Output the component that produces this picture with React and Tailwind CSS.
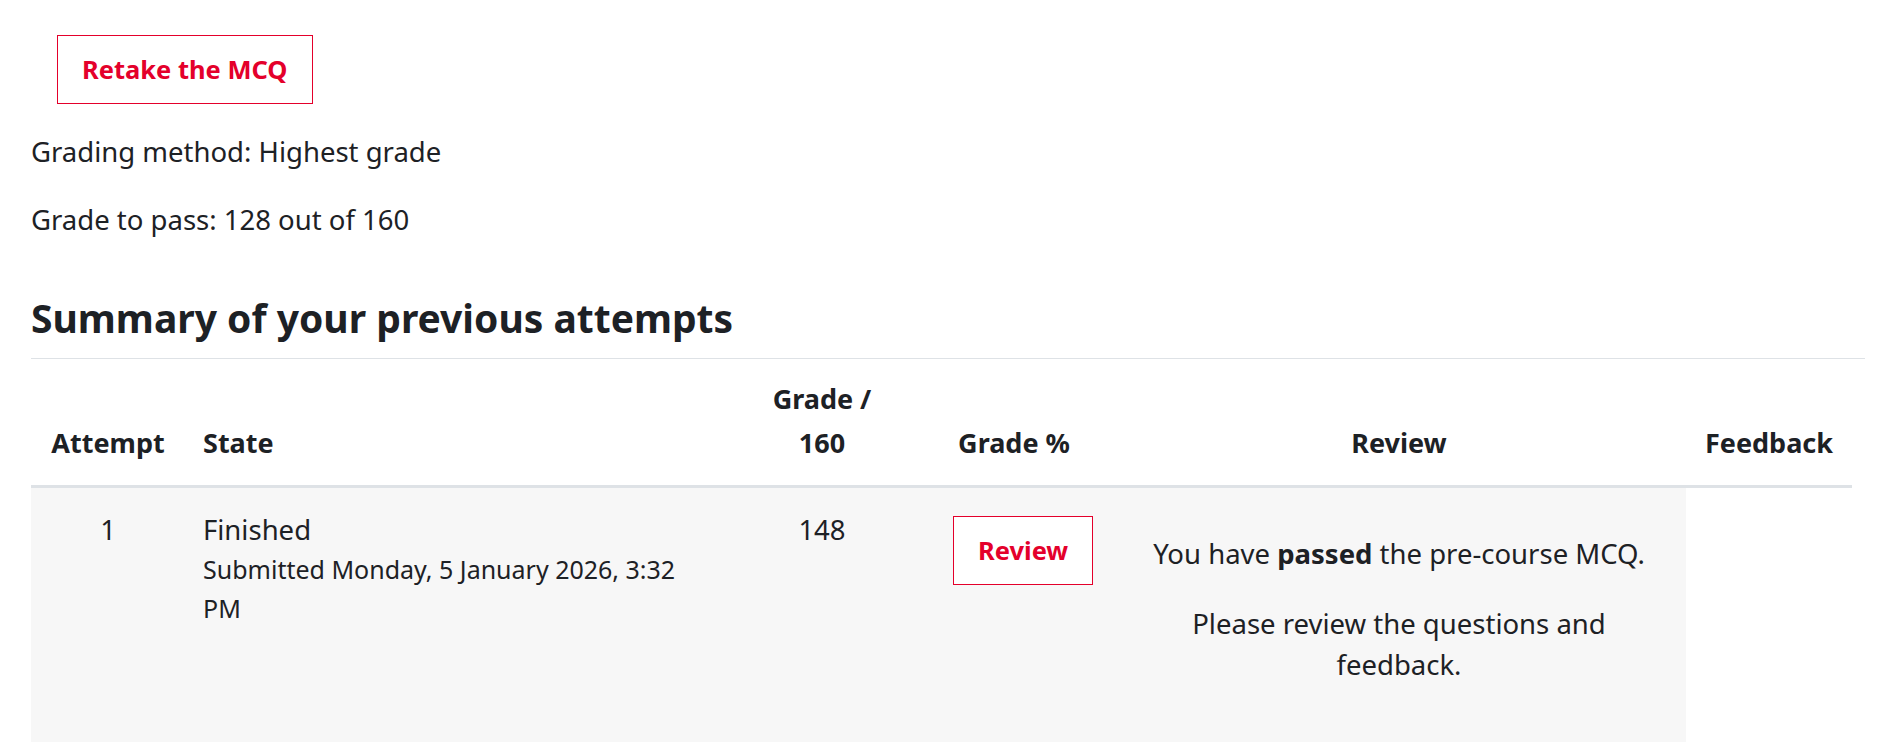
import React from 'react';

const redBtn =
  'inline-block border border-[#e4002b] bg-white text-[#e4002b] font-bold text-[25.5px] leading-[41px] px-[24px] py-[13px]';

export default function App() {
  return (
    <div
      className="bg-white text-[#1d2125] text-[27.5px] leading-[41px] px-[31px] pt-[35px]"
      style={{ fontFamily: '"Noto Sans", "Open Sans", sans-serif' }}
    >
      <div className="pl-[26px]">
        <button className={redBtn}>Retake the MCQ</button>
      </div>

      <p className="mt-[27px]">Grading method: Highest grade</p>
      <p className="mt-[27px]">Grade to pass: 128 out of 160</p>

      <h3 className="mt-[55px] text-[39px] font-bold leading-[46px] pb-[17px] border-b border-[#dee2e6]">
        Summary of your previous attempts
      </h3>

      <table className="table-fixed w-[1821px] border-collapse">
        <colgroup>
          <col className="w-[154px]" />
          <col className="w-[543px]" />
          <col className="w-[188px]" />
          <col className="w-[196px]" />
          <col className="w-[574px]" />
          <col className="w-[166px]" />
        </colgroup>
        <thead>
          <tr className="border-b-[3px] border-[#dee2e6] align-bottom font-bold text-[27px] leading-[44px]">
            <th className="text-center pt-[18px] pb-[20px]">Attempt</th>
            <th className="text-left pl-[18px] pt-[18px] pb-[20px]">State</th>
            <th className="text-center pt-[18px] pb-[20px]">
              Grade /<br />160
            </th>
            <th className="text-center pt-[18px] pb-[20px]">Grade %</th>
            <th className="text-center pt-[18px] pb-[20px]">Review</th>
            <th className="text-center pt-[18px] pb-[20px]">Feedback</th>
          </tr>
        </thead>
        <tbody>
          <tr className="align-top">
            <td className="bg-[#f7f7f7] text-center pt-[21px] pb-[193px]">1</td>
            <td className="bg-[#f7f7f7] pl-[18px] pt-[21px]">
              <div>Finished</div>
              <div className="text-[25px] leading-[39px]">
                Submitted Monday, 5 January 2026, 3:32
                <br />
                PM
              </div>
            </td>
            <td className="bg-[#f7f7f7] text-center pt-[21px]">148</td>
            <td className="bg-[#f7f7f7] pl-[37px] pt-[28px]">
              <button className={redBtn}>Review</button>
            </td>
            <td className="bg-[#f7f7f7] text-center pt-[45px] px-[18px]">
              <p>
                You have <strong className="font-bold">passed</strong> the pre-course MCQ.
              </p>
              <p className="mt-[29px]">
                Please review the questions and
                <br />
                feedback.
              </p>
            </td>
          </tr>
        </tbody>
      </table>
    </div>
  );
}
